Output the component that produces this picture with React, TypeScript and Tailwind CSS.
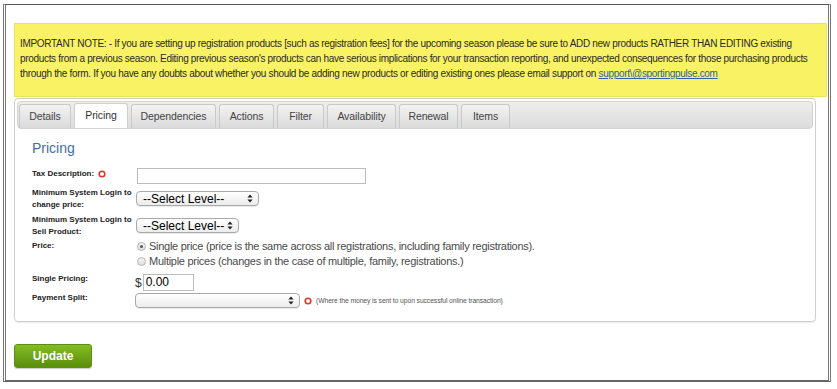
import React from "react";

const tabs = [
  { name: "Details", w: "w-[52px]" },
  { name: "Pricing", w: "w-[54px]", active: true },
  { name: "Dependencies", w: "w-[85px]" },
  { name: "Actions", w: "w-[55px]" },
  { name: "Filter", w: "w-[47px]" },
  { name: "Availability", w: "w-[69px]" },
  { name: "Renewal", w: "w-[59px]" },
  { name: "Items", w: "w-[49px]" },
];

function Required() {
  return (
    <svg width="8" height="8" viewBox="0 0 8 8" className="inline-block shrink-0">
      <circle cx="4" cy="4" r="2.8" fill="none" stroke="#e0352b" strokeWidth="1.6" />
    </svg>
  );
}

function Arrows() {
  return (
    <svg width="6" height="9" viewBox="0 0 6 9">
      <path d="M3 0.5 L5.6 3.6 L0.4 3.6 Z" fill="#222" />
      <path d="M3 8.5 L5.6 5.4 L0.4 5.4 Z" fill="#222" />
    </svg>
  );
}

function FakeSelect({ w, label }: { w: string; label?: string }) {
  return (
    <div
      className={`${w} h-[15px] flex items-center justify-between pl-[6px] pr-[5px] rounded-[4px] border border-[#a9a9a9] bg-gradient-to-b from-white to-[#ececec] shadow-[0_1px_0_rgba(0,0,0,0.08)]`}
    >
      <span className="font-['Liberation_Sans',sans-serif] font-normal text-[12px] leading-none text-black whitespace-nowrap">
        {label}
      </span>
      <Arrows />
    </div>
  );
}

function Radio({ checked }: { checked?: boolean }) {
  return (
    <span className="w-[9px] h-[9px] rounded-full border border-[#b5b5b5] bg-gradient-to-b from-[#f4f4f4] to-[#dedede] flex items-center justify-center shrink-0">
      {checked && <span className="w-[3px] h-[3px] rounded-full bg-[#555]" />}
    </span>
  );
}

export default function App() {
  return (
    <div className="w-[837px] h-[389px] bg-white font-['Liberation_Sans',sans-serif] text-[#333]">
      <div className="ml-[3px] pt-[4px]">
        <div className="w-[828px] h-[378px] border-t border-t-[#555] border-l-[3px] border-l-[#777] border-r-[3px] border-r-[#777] border-b-[2px] border-b-[#666] border-double">
          <div className="pl-[8px] pt-[18px]">
            <div className="w-[813px] h-[74px] bg-[#f9f264] border border-[#ebe35a] pl-[5px] pt-[12px] text-[10px] tracking-[-0.32px] leading-[15px] text-[#2b2b2b] whitespace-nowrap">
              IMPORTANT NOTE: - If you are setting up registration products [such as registration fees] for the upcoming season please be sure to ADD new products RATHER THAN EDITING existing
              <br />
              products from a previous season. Editing previous season's products can have serious implications for your transaction reporting, and unexpected consequences for those purchasing products
              <br />
              through the form. If you have any doubts about whether you should be adding new products or editing existing ones please email support on{" "}
              <a className="text-[#2f5fa5] underline">support\@sportingpulse.com</a>
            </div>

            <div className="mt-[1px] w-[802px] h-[224px] border border-[#cfcfcf] rounded-[4px] p-[2px] shadow-[0_1px_1px_rgba(0,0,0,0.08)]">
              <div className="h-[28px] rounded-[4px] border border-[#d3d3d3] bg-gradient-to-b from-[#eeeeee] to-[#dcdcdc] flex items-end gap-[3px] pl-[1px]">
                {tabs.map((t) => (
                  <div
                    key={t.name}
                    className={`${t.w} flex items-center justify-center rounded-t-[3px] border border-b-0 text-[10.5px] tracking-[-0.1px] ${
                      t.active
                        ? "bg-white border-[#cfcfcf] text-[#333] h-[25px]"
                        : "h-[24px] bg-gradient-to-b from-[#f3f3f3] to-[#dadada] border-[#c9c9c9] text-[#444]"
                    }`}
                  >
                    {t.name}
                  </div>
                ))}
              </div>

              <div className="pl-[15px] pt-[10px]">
                <h2 className="text-[14px] leading-[18px] text-[#3f6ea8]">Pricing</h2>

                <div className="mt-[11px] flex flex-col text-[8px] leading-[11px] font-bold text-[#222] whitespace-nowrap">
                  <div className="flex h-[17px] items-start">
                    <div className="w-[105px] flex items-center gap-[4px]">
                      Tax Description: <Required />
                    </div>
                    <div className="w-[229px] h-[16px] border border-[#bdbdbd] bg-white" />
                  </div>

                  <div className="flex h-[27px] items-center">
                    <div className="w-[104px] leading-[12px]">
                      Minimum System Login to
                      <br />
                      change price:
                    </div>
                    <FakeSelect w="w-[123px]" label="--Select Level--" />
                  </div>

                  <div className="flex h-[27px] items-center">
                    <div className="w-[104px] leading-[12px]">
                      Minimum System Login to
                      <br />
                      Sell Product:
                    </div>
                    <FakeSelect w="w-[103px]" label="--Select Level-- " />
                  </div>

                  <div className="flex h-[34px] items-start">
                    <div className="w-[105px] pt-[1px]">Price:</div>
                    <div className="flex flex-col font-normal text-[11px] leading-[15px] tracking-[-0.28px] text-[#4a4a4a]">
                      <div className="flex items-center gap-[3px]">
                        <Radio checked />
                        Single price (price is the same across all registrations, including family registrations).
                      </div>
                      <div className="flex items-center gap-[3px]">
                        <Radio />
                        Multiple prices (changes in the case of multiple, family, registrations.)
                      </div>
                    </div>
                  </div>

                  <div className="flex h-[19px] items-start">
                    <div className="w-[103px]">Single Pricing:</div>
                    <span className="mt-[3px] font-normal text-[12px] leading-[14px] text-[#333] mr-[1px]">$</span>
                    <div className="mt-[1px] w-[51px] h-[17px] border border-[#bdbdbd] bg-white font-normal text-[12px] leading-[15px] text-black pl-[2px]">
                      0.00
                    </div>
                  </div>

                  <div className="flex h-[18px] items-start">
                    <div className="w-[103px]">Payment Split:</div>
                    <div className="mt-[1px] flex items-center">
                      <FakeSelect w="w-[165px]" />
                      <span className="ml-[4px] flex items-center">
                        <Required />
                      </span>
                      <span className="ml-[4px] font-normal text-[6.8px] tracking-[-0.1px] text-[#555]">
                        (Where the money is sent to upon successful online transaction)
                      </span>
                    </div>
                  </div>
                </div>
              </div>
            </div>

            <button className="mt-[22px] w-[78px] h-[24px] rounded-[3px] border border-[#5f8f12] bg-gradient-to-b from-[#84bd22] to-[#5b8e0c] text-white font-bold text-[12px] shadow-[0_1px_1px_rgba(0,0,0,0.2)]">
              Update
            </button>
          </div>
        </div>
      </div>
    </div>
  );
}
